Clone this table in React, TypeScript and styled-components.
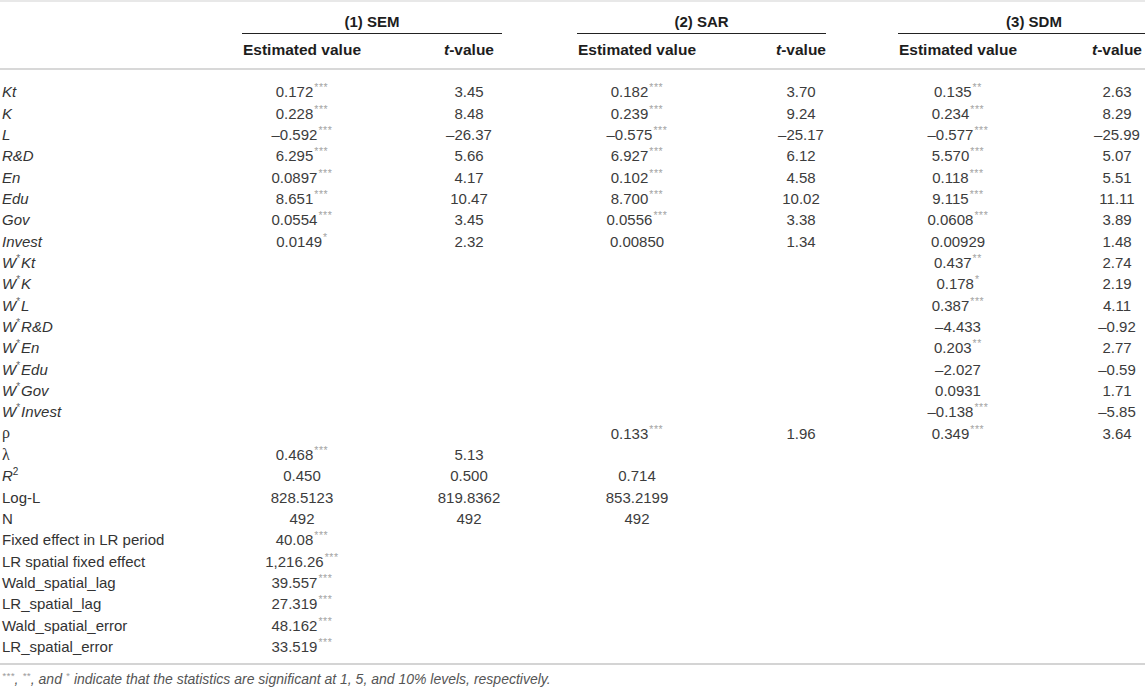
import React from 'react';
import styled, { createGlobalStyle } from 'styled-components';

// column tracks: label | est1 | gap | t1 | gap | est2 | gap | t2 | gap | est3 | gap | t3 | overflow
const COLS = '242px 120px 74px 66px 75px 120px 79px 50px 72px 120px 67px 64px 21px';

const Global = createGlobalStyle`
  html, body { margin: 0; padding: 0; background: #fff; overflow: hidden; }
  body { font-family: "Liberation Sans", Arial, sans-serif; color: #333; }
`;

const Page = styled.div` width: 1170px; `;
const Table = styled.div` border-top: 2px solid #e8e8e8; `;
const Grid = styled.div` display: grid; grid-template-columns: ${COLS}; `;
const GroupRow = styled(Grid)` padding-top: 11px; `;
const Group = styled.div<{ $col: string }>`
  grid-column: ${({ $col }) => $col};
  text-align: center; font-weight: bold; font-size: 15px; line-height: 18px;
  padding-bottom: 2px; border-bottom: 1px solid #222; color: #1d1d1d;
`;
const SubRow = styled(Grid)` padding: 7px 0 9px; border-bottom: 2px solid #d8d8d8; `;
const SubHead = styled.div<{ $col: number }>`
  grid-column: ${({ $col }) => $col};
  justify-self: center; white-space: nowrap;
  font-weight: bold; font-size: 15.5px; line-height: 18px; color: #1d1d1d;
`;
const Body = styled.div` padding: 11px 0 6px; border-bottom: 2px solid #d4d4d4; `;
const Row = styled(Grid)` height: 21.35px; align-items: center; font-size: 15px; `;
const Label = styled.div` grid-column: 1; padding-left: 2px; white-space: nowrap; color: #333; `;
const Cell = styled.div<{ $col: number }>`
  grid-column: ${({ $col }) => $col};
  justify-self: center; white-space: nowrap; color: #3c3c3c;
`;
const Stars = styled.sup`
  font-size: 10.5px; line-height: 0; vertical-align: 6px; color: #a4a4a4; letter-spacing: 0.6px;
  margin-left: 1px;
`;
const WStar = styled.sup` font-size: 10px; line-height: 0; vertical-align: 6px; color: #666; margin: 0 1px 0 0; `;
const Greek = styled.span` font-family: "Liberation Serif", "Times New Roman", serif; font-size: 16px; `;
const Two = styled.sup` font-size: 10px; line-height: 0; vertical-align: 6px; `;
const Note = styled.div`
  padding: 7px 0 0 2px; font-size: 14px; line-height: 15px; font-style: italic; color: #555;
`;
const NoteStar = styled.sup` font-size: 9.5px; line-height: 0; vertical-align: 5px; color: #9a9a9a; letter-spacing: 0.5px; `;

const Val = ({ v }: { v: string }) => {
  const m = v.match(/^(.*?)(\*+)$/);
  if (!m) return <>{v}</>;
  return <>{m[1]}<Stars>{m[2]}</Stars></>;
};

const w = (name: string) => <><i>W</i><WStar>*</WStar><i>{name}</i></>;

type R = { label: React.ReactNode; v: (string | null)[] };

const rows: R[] = [
  { label: <i>Kt</i>, v: ['0.172***', '3.45', '0.182***', '3.70', '0.135**', '2.63'] },
  { label: <i>K</i>, v: ['0.228***', '8.48', '0.239***', '9.24', '0.234***', '8.29'] },
  { label: <i>L</i>, v: ['–0.592***', '–26.37', '–0.575***', '–25.17', '–0.577***', '–25.99'] },
  { label: <i>R&amp;D</i>, v: ['6.295***', '5.66', '6.927***', '6.12', '5.570***', '5.07'] },
  { label: <i>En</i>, v: ['0.0897***', '4.17', '0.102***', '4.58', '0.118***', '5.51'] },
  { label: <i>Edu</i>, v: ['8.651***', '10.47', '8.700***', '10.02', '9.115***', '11.11'] },
  { label: <i>Gov</i>, v: ['0.0554***', '3.45', '0.0556***', '3.38', '0.0608***', '3.89'] },
  { label: <i>Invest</i>, v: ['0.0149*', '2.32', '0.00850', '1.34', '0.00929', '1.48'] },
  { label: w('Kt'), v: [null, null, null, null, '0.437**', '2.74'] },
  { label: w('K'), v: [null, null, null, null, '0.178*', '2.19'] },
  { label: w('L'), v: [null, null, null, null, '0.387***', '4.11'] },
  { label: w('R&D'), v: [null, null, null, null, '–4.433', '–0.92'] },
  { label: w('En'), v: [null, null, null, null, '0.203**', '2.77'] },
  { label: w('Edu'), v: [null, null, null, null, '–2.027', '–0.59'] },
  { label: w('Gov'), v: [null, null, null, null, '0.0931', '1.71'] },
  { label: w('Invest'), v: [null, null, null, null, '–0.138***', '–5.85'] },
  { label: <Greek>ρ</Greek>, v: [null, null, '0.133***', '1.96', '0.349***', '3.64'] },
  { label: <Greek>λ</Greek>, v: ['0.468***', '5.13', null, null, null, null] },
  { label: <><i>R</i><Two>2</Two></>, v: ['0.450', '0.500', '0.714', null, null, null] },
  { label: 'Log-L', v: ['828.5123', '819.8362', '853.2199', null, null, null] },
  { label: 'N', v: ['492', '492', '492', null, null, null] },
  { label: 'Fixed effect in LR period', v: ['40.08***'] },
  { label: 'LR spatial fixed effect', v: ['1,216.26***'] },
  { label: 'Wald_spatial_lag', v: ['39.557***'] },
  { label: 'LR_spatial_lag', v: ['27.319***'] },
  { label: 'Wald_spatial_error', v: ['48.162***'] },
  { label: 'LR_spatial_error', v: ['33.519***'] },
];

const valueCols = [2, 4, 6, 8, 10, 12];

export default function App() {
  return (
    <Page>
      <Global />
      <Table>
        <GroupRow>
          <Group $col="2 / 5">(1) SEM</Group>
          <Group $col="6 / 9">(2) SAR</Group>
          <Group $col="10 / 14">(3) SDM</Group>
        </GroupRow>
        <SubRow>
          {[0, 1, 2].map(g => (
            <React.Fragment key={g}>
              <SubHead $col={valueCols[g * 2]}>Estimated value</SubHead>
              <SubHead $col={valueCols[g * 2 + 1]}><i>t</i>-value</SubHead>
            </React.Fragment>
          ))}
        </SubRow>
        <Body>
          {rows.map((r, i) => (
            <Row key={i}>
              <Label>{r.label}</Label>
              {r.v.map((v, j) => v && (
                <Cell key={j} $col={valueCols[j]}><Val v={v} /></Cell>
              ))}
            </Row>
          ))}
        </Body>
      </Table>
      <Note>
        <NoteStar>***</NoteStar>, <NoteStar>**</NoteStar>, and <NoteStar>*</NoteStar> indicate that the statistics are significant at 1, 5, and 10% levels, respectively.
      </Note>
    </Page>
  );
}
